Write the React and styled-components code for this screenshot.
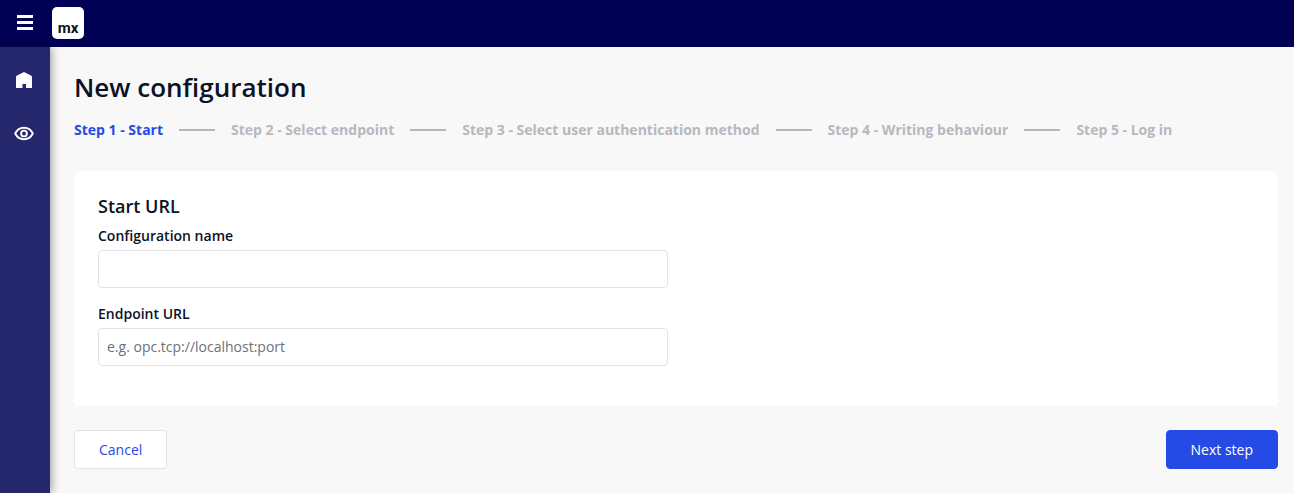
import React from "react";
import styled, { createGlobalStyle } from "styled-components";

const GlobalStyle = createGlobalStyle`
  *, *::before, *::after { box-sizing: border-box; }
  body {
    margin: 0;
    background: #f8f8f8;
    color: #0a1325;
    font-family: "Open Sans", sans-serif;
    font-size: 14px;
    line-height: 20px;
  }
  button, input { font: inherit; }
`;

const Page = styled.div`
  display: flex;
  flex-direction: column;
  min-height: 100vh;
`;

const TopBar = styled.header`
  display: flex;
  align-items: center;
  gap: 16px;
  height: 47px;
  padding: 0 14px 1px;
  background: #000055;
`;

const IconButton = styled.button`
  display: flex;
  padding: 0;
  border: 0;
  background: none;
  color: #fff;
  cursor: pointer;
`;

const Logo = styled.div`
  display: flex;
  justify-content: center;
  align-items: flex-end;
  width: 32px;
  height: 32px;
  padding-bottom: 1px;
  border-radius: 5px;
  background: #fff;
  color: #0a1325;
  font: 700 15px/20px Roboto, sans-serif;
`;

const Body = styled.div`
  display: flex;
  flex: 1;
`;

const Sidebar = styled.nav`
  display: flex;
  flex-direction: column;
  flex: none;
  align-items: center;
  gap: 32px;
  width: 50px;
  padding: 23px 2px 0 0;
  background: #24276c;
  box-shadow: 2px 0 8px rgba(0, 0, 0, 0.35);
`;

const NavLink = styled.a`
  display: flex;
  color: #fff;
`;

const Main = styled.main`
  flex: 1;
  min-width: 0;
  padding: 24px 16px 24px 24px;
`;

const Title = styled.h1`
  margin: 0 0 16px;
  font-size: 26px;
  font-weight: 600;
  line-height: 33px;
`;

const Steps = styled.ol`
  display: flex;
  align-items: center;
  margin: 0 0 31px;
  padding: 0;
  list-style: none;
`;

const Step = styled.li`
  display: flex;
  align-items: center;
  color: ${({ $active }) => ($active ? "#264ae5" : "#b6b8be")};
  font-weight: 700;

  &:not(:first-child)::before {
    content: "";
    width: 36px;
    height: 2px;
    margin: 0 16px;
    background: #b7b7b9;
  }
`;

const Card = styled.section`
  padding: 24px 24px 40px;
  border-radius: 5px;
  background: #fff;
`;

const CardTitle = styled.h2`
  margin: 0 0 8px;
  font-size: 18px;
  font-weight: 600;
  line-height: 23px;
`;

const Field = styled.div`
  display: flex;
  flex-direction: column;
  gap: 4px;
  width: calc(50% - 8px);

  & + & { margin-top: 16px; }
`;

const Label = styled.label`
  font-weight: 600;
`;

const TextInput = styled.input`
  width: 100%;
  height: 38px;
  padding: 0 8px 2px;
  border: 1px solid #e2e3e6;
  border-radius: 4px;
  background: #fff;
  color: #0a1325;

  &::placeholder { color: #6c717c; opacity: 1; }
`;

const Actions = styled.div`
  display: flex;
  justify-content: space-between;
  margin-top: 24px;
`;

const Button = styled.button`
  height: 39px;
  padding: 0 24px;
  border: 1px solid ${({ $primary }) => ($primary ? "#264ae5" : "#e2e3e6")};
  border-radius: 4px;
  background: ${({ $primary }) => ($primary ? "#264ae5" : "#fff")};
  color: ${({ $primary }) => ($primary ? "#fff" : "#264ae5")};
  cursor: pointer;
`;

const STEPS = [
  "Step 1 - Start",
  "Step 2 - Select endpoint",
  "Step 3 - Select user authentication method",
  "Step 4 - Writing behaviour",
  "Step 5 - Log in",
];

const MenuIcon = () => (
  <svg width="22" height="20" viewBox="0 0 22 20" fill="currentColor" aria-hidden="true">
    <path d="M3 2h16v3H3zM3 8h16v3H3zM3 14h16v3H3z" />
  </svg>
);

const HomeIcon = () => (
  <svg width="20" height="21" viewBox="0 0 20 21" fill="currentColor" aria-hidden="true">
    <path d="M10 2l7 3.600q1 .5 1 1.600V18h-6v-4H8.500v4H2V7.200q0-1.100 1-1.600z" />
  </svg>
);

const EyeIcon = () => (
  <svg width="20" height="20" viewBox="0 0 20 20" fill="none" stroke="currentColor" strokeWidth="1.900" aria-hidden="true">
    <path d="M1.200 10.500C3 6.800 6.200 4.800 10 4.800s7 2 8.800 5.700c-1.800 3.700-5 5.700-8.800 5.700s-7-2-8.800-5.700z" />
    <circle cx="10" cy="10.500" r="2.900" />
  </svg>
);

export default function App() {
  return (
    <Page>
      <GlobalStyle />
      <TopBar>
        <IconButton type="button" aria-label="Toggle menu"><MenuIcon /></IconButton>
        <Logo>mx</Logo>
      </TopBar>
      <Body>
        <Sidebar aria-label="Main">
          <NavLink href="#home" aria-label="Home"><HomeIcon /></NavLink>
          <NavLink href="#view" aria-label="View"><EyeIcon /></NavLink>
        </Sidebar>
        <Main>
          <Title>New configuration</Title>
          <Steps>
            {STEPS.map((step, index) => (
              <Step key={step} $active={index === 0}>{step}</Step>
            ))}
          </Steps>
          <Card>
            <CardTitle>Start URL</CardTitle>
            <Field>
              <Label htmlFor="configuration-name">Configuration name</Label>
              <TextInput id="configuration-name" type="text" />
            </Field>
            <Field>
              <Label htmlFor="endpoint-url">Endpoint URL</Label>
              <TextInput id="endpoint-url" type="text" placeholder="e.g. opc.tcp://localhost:port" />
            </Field>
          </Card>
          <Actions>
            <Button type="button">Cancel</Button>
            <Button type="button" $primary>Next step</Button>
          </Actions>
        </Main>
      </Body>
    </Page>
  );
}
